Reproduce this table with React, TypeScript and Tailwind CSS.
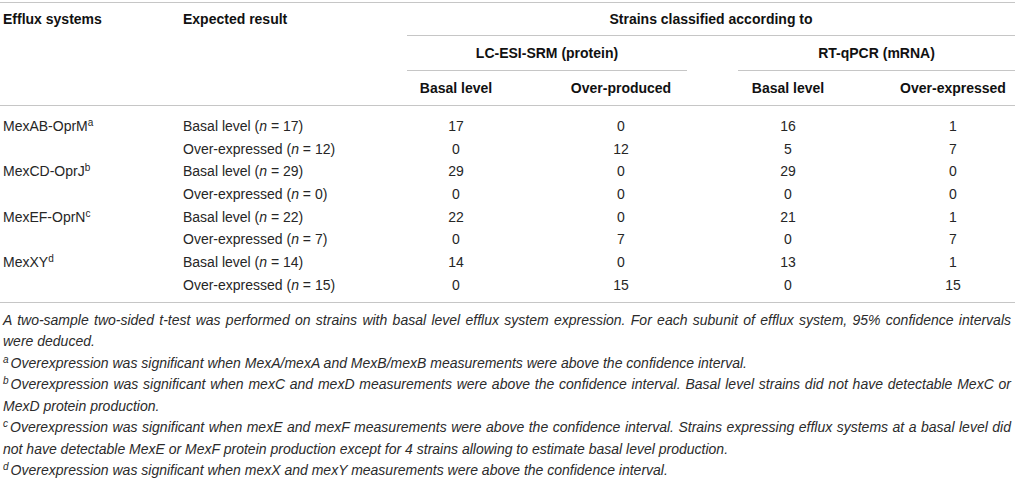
import React from 'react';

type Row = {
  system?: React.ReactNode;
  expected: string;
  n: number;
  lcBasal: number;
  lcOver: number;
  rtBasal: number;
  rtOver: number;
};

const rows: Row[] = [
  { system: <>MexAB-OprM<sup className="text-[10px]">a</sup></>, expected: 'Basal level', n: 17, lcBasal: 17, lcOver: 0, rtBasal: 16, rtOver: 1 },
  { expected: 'Over-expressed', n: 12, lcBasal: 0, lcOver: 12, rtBasal: 5, rtOver: 7 },
  { system: <>MexCD-OprJ<sup className="text-[10px]">b</sup></>, expected: 'Basal level', n: 29, lcBasal: 29, lcOver: 0, rtBasal: 29, rtOver: 0 },
  { expected: 'Over-expressed', n: 0, lcBasal: 0, lcOver: 0, rtBasal: 0, rtOver: 0 },
  { system: <>MexEF-OprN<sup className="text-[10px]">c</sup></>, expected: 'Basal level', n: 22, lcBasal: 22, lcOver: 0, rtBasal: 21, rtOver: 1 },
  { expected: 'Over-expressed', n: 7, lcBasal: 0, lcOver: 7, rtBasal: 0, rtOver: 7 },
  { system: <>MexXY<sup className="text-[10px]">d</sup></>, expected: 'Basal level', n: 14, lcBasal: 14, lcOver: 0, rtBasal: 13, rtOver: 1 },
  { expected: 'Over-expressed', n: 15, lcBasal: 0, lcOver: 15, rtBasal: 0, rtOver: 15 },
];

const cols = 'grid grid-cols-[180px_227px_98px_232px_102px_176px]';

const Note = ({ mark, children }: { mark?: string; children: React.ReactNode }) => (
  <p className="text-justify [text-align-last:left]">
    {mark && <sup className="text-[10px] mr-[2px]">{mark}</sup>}
    {children}
  </p>
);

export default function App() {
  return (
    <div className="w-[1015px] h-[483px] bg-white text-[#262626] font-['Liberation_Sans',Arial,sans-serif] overflow-hidden">
      <div className="mt-[2px] border-t-[1.5px] border-[#c6c6c6]" />

      {/* header */}
      <div className="text-[14px] font-bold text-[#111]">
        <div className={cols}>
          <div className="h-[33px] flex items-center pl-[3px]">Efflux systems</div>
          <div className="h-[33px] flex items-center pl-[3px]">Expected result</div>
          <div className="col-span-4 h-[33px] flex items-center justify-center border-b-[1.5px] border-[#c6c6c6]">
            Strains classified according to
          </div>
        </div>
        <div className="flex">
          <div className="w-[407px]" />
          <div className="w-[280px] h-[35px] flex items-center justify-center border-b-[1.5px] border-[#c6c6c6]">
            LC-ESI-SRM (protein)
          </div>
          <div className="w-[51px]" />
          <div className="w-[277px] h-[35px] flex items-center justify-center border-b-[1.5px] border-[#c6c6c6]">
            RT-qPCR (mRNA)
          </div>
        </div>
        <div className={`${cols} h-[35px] items-center border-b-[1.5px] border-[#c6c6c6]`}>
          <div />
          <div />
          <div className="text-center">Basal level</div>
          <div className="text-center">Over-produced</div>
          <div className="text-center">Basal level</div>
          <div className="text-center pl-[52px]">Over-expressed</div>
        </div>
      </div>

      {/* body */}
      <div className="text-[14px] pt-[9px] pb-[5px] border-b-[1.5px] border-[#c6c6c6]">
        {rows.map((r, i) => (
          <div key={i} className={`${cols} h-[22.7px] items-center`}>
            <div className="pl-[3px]">{r.system}</div>
            <div className="pl-[3px]">
              {r.expected} (<span className="italic">n</span>&nbsp;=&nbsp;{r.n})
            </div>
            <div className="text-center">{r.lcBasal}</div>
            <div className="text-center">{r.lcOver}</div>
            <div className="text-center">{r.rtBasal}</div>
            <div className="text-center pl-[52px]">{r.rtOver}</div>
          </div>
        ))}
      </div>

      {/* footnotes */}
      <div className="pt-[7px] pl-[3px] pr-[4px] text-[14px] italic leading-[21.5px] text-[#2b2b2b]">
        <Note>
          A two-sample two-sided t-test was performed on strains with basal level efflux system expression. For each
          subunit of efflux system, 95% confidence intervals were deduced.
        </Note>
        <Note mark="a">
          Overexpression was significant when MexA/mexA and MexB/mexB measurements were above the confidence interval.
        </Note>
        <Note mark="b">
          Overexpression was significant when mexC and mexD measurements were above the confidence interval. Basal level
          strains did not have detectable MexC or MexD protein production.
        </Note>
        <Note mark="c">
          Overexpression was significant when mexE and mexF measurements were above the confidence interval. Strains
          expressing efflux systems at a basal level did not have detectable MexE or MexF protein production except for 4
          strains allowing to estimate basal level production.
        </Note>
        <Note mark="d">
          Overexpression was significant when mexX and mexY measurements were above the confidence interval.
        </Note>
      </div>
    </div>
  );
}
